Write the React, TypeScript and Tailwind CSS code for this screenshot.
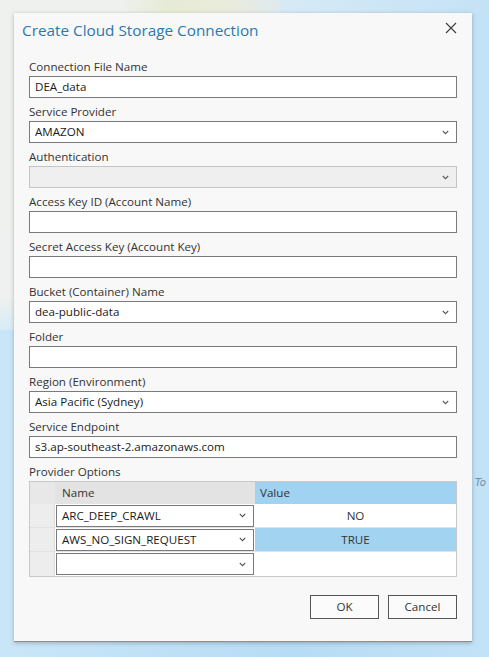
import React from "react";

const Chevron = () => (
  <svg width="7" height="5" viewBox="0 0 7 5" className="shrink-0">
    <polyline points="0.8,1 3.5,3.7 6.2,1" fill="none" stroke="#5a5a5a" strokeWidth="1.1" />
  </svg>
);

const Label = ({ children }: { children: React.ReactNode }) => (
  <div className="h-[23px] flex items-end pb-[1px] leading-[16px] text-[11.6px] text-[#333333]">{children}</div>
);

const TextBox = ({ value }: { value?: string }) => (
  <div className="h-[22px] border border-[#7a7a7a] bg-white flex items-center px-[5px] text-[11.6px] text-[#1a1a1a] leading-none">
    {value}
  </div>
);

const Select = ({ value, disabled }: { value?: string; disabled?: boolean }) => (
  <div
    className={
      disabled
        ? "h-[22px] border border-[#c4c4c4] bg-[#efefef] flex items-center pl-[5px] pr-[7px] text-[11.6px]"
        : "h-[22px] border border-[#7a7a7a] bg-white flex items-center pl-[5px] pr-[7px] text-[11.6px] text-[#1a1a1a]"
    }
  >
    <span className="flex-1 leading-none">{value}</span>
    <Chevron />
  </div>
);

const Field = ({ label, children }: { label: string; children: React.ReactNode }) => (
  <div className="flex flex-col">
    <Label>{label}</Label>
    {children}
  </div>
);

const rows = [
  { name: "ARC_DEEP_CRAWL", value: "NO", sel: false },
  { name: "AWS_NO_SIGN_REQUEST", value: "TRUE", sel: true },
  { name: "", value: "", sel: false },
];

export default function App() {
  return (
    <div
      className="relative w-[489px] h-[657px] overflow-hidden bg-[#b8dcf5]"
      style={{ fontFamily: '"Open Sans", "Noto Sans", sans-serif' }}
    >
      {/* map background */}
      <div className="absolute left-0 top-0 w-[489px] h-[657px] bg-[linear-gradient(90deg,#c9e6f8_0%,#b7dcf5_60%,#c2e2f7_100%)]" />
      <div className="absolute left-0 top-0 w-[260px] h-[330px] bg-[linear-gradient(180deg,#eef1ee_0%,#eef1ef_90%,#d8ebf6_100%)]" />
      <div className="absolute left-[120px] top-0 w-[160px] h-[14px] bg-[linear-gradient(90deg,#eef1ee,#e6ebd6_30%,#e9ecdc_70%,#dfeaf0)]" />
      <div className="absolute left-[280px] top-0 w-[209px] h-[14px] bg-[linear-gradient(90deg,#d6eaf5,#c4e2f6)]" />
      <div className="absolute left-[475px] top-[478px] text-[10px] italic text-[#6f8ea6] leading-none" style={{ fontFamily: '"DejaVu Sans", sans-serif' }}>
        To
      </div>

      {/* dialog */}
      <div className="relative ml-[14px] pt-[13px]">
        <div className="w-[458px] h-[629px] bg-[#f8f8f8] border-b border-[#8f8f8f] shadow-[0_1px_4px_rgba(0,0,0,0.25)] flex flex-col">
          <div className="h-[40px] flex items-start justify-between pl-[8px] pr-[15px] pt-[6px]">
            <div className="text-[15.3px] text-[#2a78b0] leading-[22px]">Create Cloud Storage Connection</div>
            <svg width="12" height="12" viewBox="0 0 12 12" className="mt-[3px]">
              <path d="M1 1 L11 11 M11 1 L1 11" stroke="#3c3c3c" strokeWidth="1.1" fill="none" />
            </svg>
          </div>

          <div className="flex flex-col px-[15px]">
            <Field label="Connection File Name"><TextBox value="DEA_data" /></Field>
            <Field label="Service Provider"><Select value="AMAZON" /></Field>
            <Field label="Authentication"><Select disabled /></Field>
            <Field label="Access Key ID (Account Name)"><TextBox /></Field>
            <Field label="Secret Access Key (Account Key)"><TextBox /></Field>
            <Field label="Bucket (Container) Name"><Select value="dea-public-data" /></Field>
            <Field label="Folder"><TextBox /></Field>
            <Field label="Region (Environment)"><Select value="Asia Pacific (Sydney)" /></Field>
            <Field label="Service Endpoint"><TextBox value="s3.ap-southeast-2.amazonaws.com" /></Field>
            <Label>Provider Options</Label>

            {/* table */}
            <div className="border border-[#c8c8c8] flex flex-col text-[11.6px] leading-none">
              <div className="h-[22px] flex">
                <div className="w-[25px] bg-[#e8e8e8] border-r border-[#e8e8e8]" />
                <div className="w-[200px] bg-[#e3e3e3] flex items-center pl-[7px] text-[#333333]">Name</div>
                <div className="flex-1 bg-[#a0d2f1] flex items-center pl-[5px] text-[#333333]">Value</div>
              </div>
              {rows.map((r, i) => (
                <div key={i} className={i < rows.length - 1 ? "h-[24px] flex border-b border-[#e2e2e2]" : "h-[24px] flex"}>
                  <div className="w-[25px] bg-[#ededed] border-r border-[#dcdcdc]" />
                  <div className="w-[200px] bg-white flex items-center px-[1px]">
                    <div className="w-full h-[22px] border border-[#7a7a7a] flex items-center pl-[5px] pr-[7px] text-[#1a1a1a]">
                      <span className="flex-1">{r.name}</span>
                      <Chevron />
                    </div>
                  </div>
                  <div className={r.sel ? "flex-1 bg-[#a2d3f1] flex items-center justify-center text-[#333333]" : "flex-1 bg-white flex items-center justify-center text-[#333333]"}>
                    {r.value}
                  </div>
                </div>
              ))}
            </div>

            <div className="flex justify-end gap-[9px] mt-[18px]">
              <div className="w-[69px] h-[24px] border border-[#555555] bg-[#fbfbfb] flex items-center justify-center text-[11.6px] text-[#333333]">OK</div>
              <div className="w-[69px] h-[24px] border border-[#555555] bg-[#fbfbfb] flex items-center justify-center text-[11.6px] text-[#333333]">Cancel</div>
            </div>
          </div>
        </div>
      </div>
    </div>
  );
}
